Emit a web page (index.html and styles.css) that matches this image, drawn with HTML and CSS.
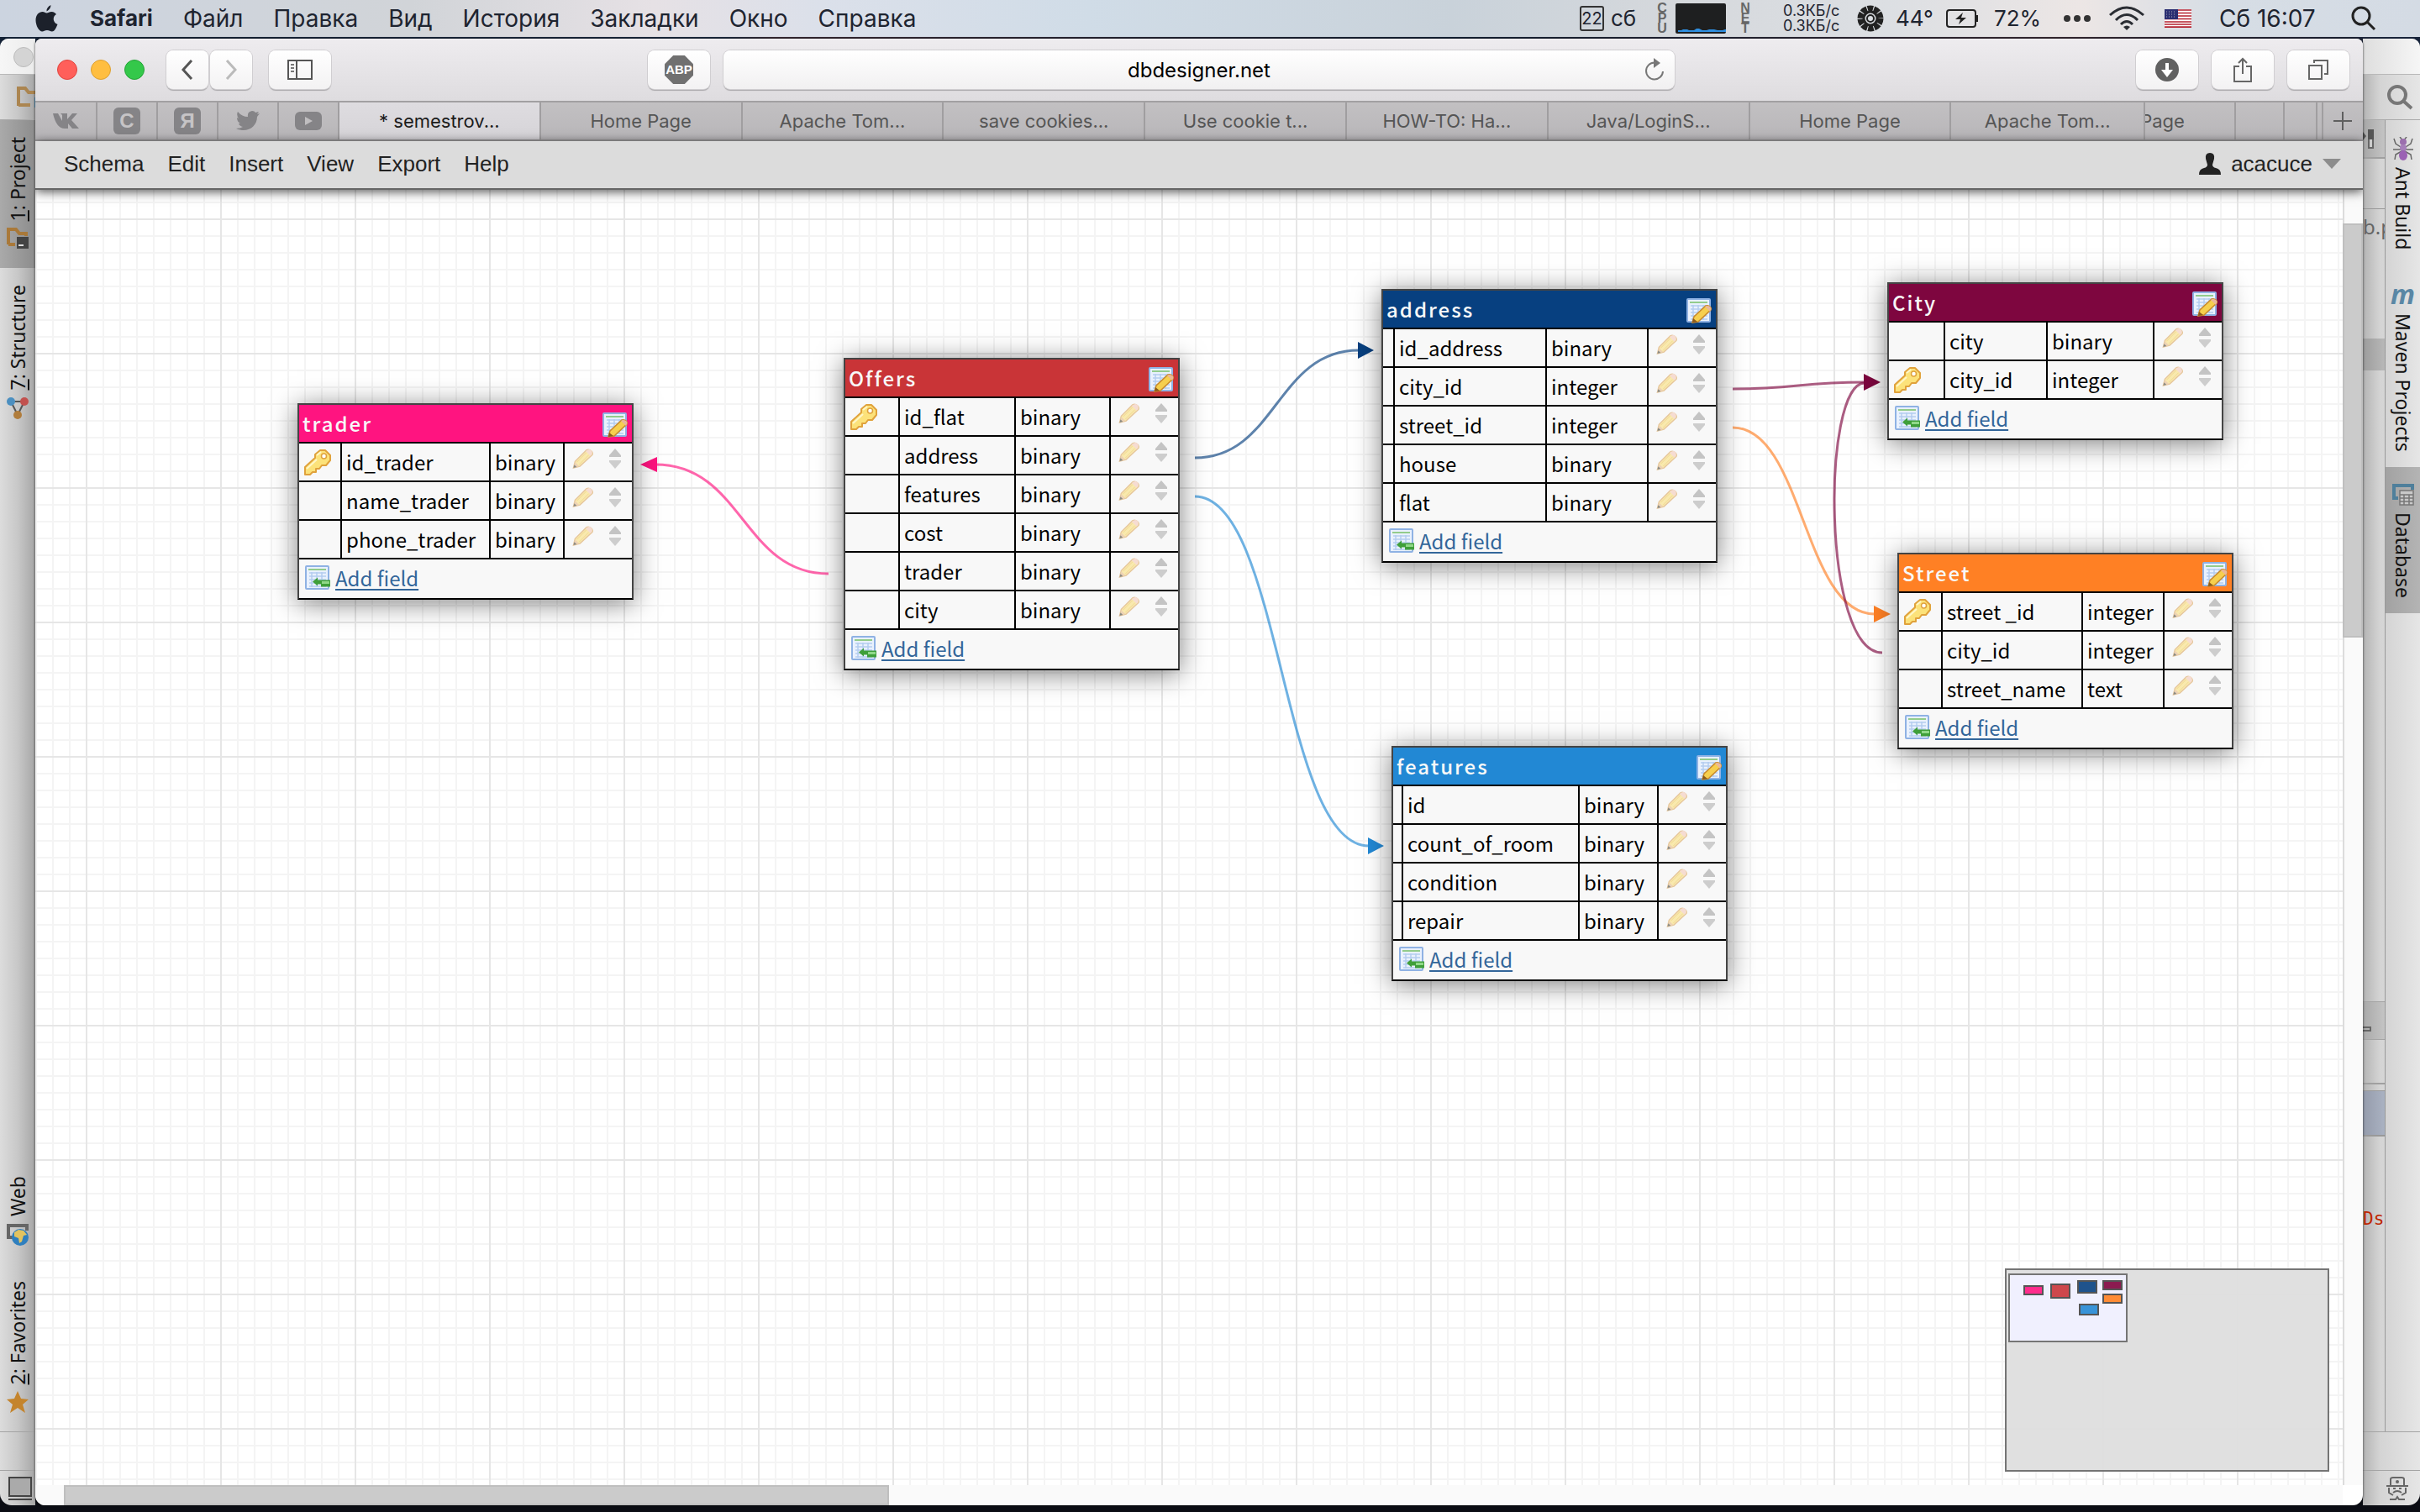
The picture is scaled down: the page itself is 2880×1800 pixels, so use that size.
FILE: index.html
```html
<!DOCTYPE html>
<html lang="ru">
<head>
<meta charset="utf-8">
<title>dbdesigner.net</title>
<link rel="stylesheet" href="styles.css">
</head>
<body>
<svg class="sprite" aria-hidden="true">
  <symbol id="key" viewBox="0 0 33 33">
    <path d="M2 31v-9L14 11v-4l6-5h6l6 6v6l-5 6h-5l-3 4h-4v4h-4l-3 3z" fill="#fce27a" stroke="#e0a23c" stroke-width="2" stroke-linejoin="round"/>
    <path d="M4 24 16 13M16 8l5-4" stroke="#fff6c8" stroke-width="2" fill="none"/>
    <circle cx="24.500" cy="9" r="3" fill="#fff" stroke="#e0a23c" stroke-width="1.500"/>
  </symbol>
  <symbol id="pencil" viewBox="0 0 25 25">
    <path d="M1 24l2-8L17 2q3-2 6 1t1 5L9 22z" fill="#f9e9ae" stroke="#e6c79c" stroke-width="1.500"/>
    <path d="M16 3l6 6 2-2q1-3-1-5t-5 0z" fill="#f6dcd2"/>
    <path d="M5 17 17 5M8 20 20 8" stroke="#efd78e" stroke-width="1"/>
    <path d="M1 24l2-7 5 5z" fill="#ecd2b4"/><path d="M1 24l1-4 3 3z" fill="#8a8a84"/>
  </symbol>
  <symbol id="sort" viewBox="0 0 16 24">
    <path d="M8 0l7 8v2H1V8z" fill="#c4c4c4"/><path d="M8 24l7-8v-2H1v2z" fill="#cdcdcd"/>
  </symbol>
  <symbol id="sheet" viewBox="0 0 30 30">
    <rect x="1" y="1" width="27" height="27" rx="1" fill="#e9f1fd" stroke="#8fb2e4" stroke-width="2"/>
    <path d="M4 5h21" stroke="#93cc8c" stroke-width="2"/>
    <path d="M5 9h20M5 13h20M5 17h20M5 21h20M5 25h20M8 8v18M14 8v18M20 8v18" stroke="#b4cdf0" stroke-width="1.500"/>
  </symbol>
  <symbol id="edit" viewBox="0 0 30 30">
    <use href="#sheet"/>
    <path d="M7 29l2-7L23 9q3-1 5 1t1 4L14 28z" fill="#f6cf4e" stroke="#c98a2c" stroke-width="1.500"/>
    <path d="M22 10l6 6 1-2q1-3-1-4t-4-1z" fill="#eab89a"/><path d="M7 29l1-5 5 4z" fill="#8a5a1c"/>
  </symbol>
  <symbol id="add" viewBox="0 0 31 30">
    <use href="#sheet" width="30" height="30"/>
    <path d="M9 19.500l6-5v3h15v8H19v-3h-4v2z" fill="#3f9f3a"/><path d="M20 19h9v3h-9z" fill="#8fd888"/>
  </symbol>
</svg>

<header class="menubar">
  <nav class="menus" aria-label="Safari">
    <svg class="apple" viewBox="0 0 26 32"><path d="M18 0q0 5-5 7.500Q12.500 3 18 0zM13 9.500c2 0 3-1.500 6-1.500 2.500 0 4.500 1.500 5.500 3-5 3-4 10 1.500 12-2 5-4 8.500-6.500 8.500-2.300 0-3-1.500-6-1.500s-3.700 1.500-5.800 1.500C4 31.500 0 24.500 0 18S4 8 8 8c2.300 0 3.500 1.500 5 1.500z" fill="#1c212b"/></svg>
    <b>Safari</b><span>Файл</span><span>Правка</span><span>Вид</span><span>История</span><span>Закладки</span><span>Окно</span><span>Справка</span>
  </nav>
  <div class="status">
    <span class="daynum">22</span>
    <span>сб</span>
    <span class="stack">C<br>P<br>U</span>
    <svg width="60" height="36" viewBox="0 0 60 36"><rect width="60" height="36" rx="2" fill="#1e1f20"/><path d="M3 34v-2h4l2-1h5l2 1h6l3-2h3l4 2h5l3-1h6l4 1h6l3-1h4v3z" fill="#2f8fe0"/></svg>
    <span class="stack">N<br>E<br>T</span>
    <span class="speed">0.3КБ/с<br>0.3КБ/с</span>
    <svg width="32" height="32" viewBox="0 0 32 32"><circle cx="16" cy="16" r="12" fill="none" stroke="#222" stroke-width="7" stroke-dasharray="6.540 1"/><circle cx="16" cy="16" r="8" fill="none" stroke="#222" stroke-width="3"/><circle cx="16" cy="16" r="4" fill="none" stroke="#222" stroke-width="2"/></svg>
    <span>44°</span>
    <svg width="38" height="22" viewBox="0 0 38 22"><rect x="1" y="1" width="34" height="20" rx="3" fill="none" stroke="#222" stroke-width="2"/><path d="M36 7h2v8h-2z" fill="#222"/><path d="M20 4l-9 8h6l-2 6 9-8h-6z" fill="#222"/></svg>
    <span>72%</span>
    <svg width="32" height="10" viewBox="0 0 32 10"><g fill="#333"><circle cx="4" cy="5" r="4"/><circle cx="16" cy="5" r="4"/><circle cx="28" cy="5" r="4"/></g></svg>
    <svg width="42" height="30" viewBox="0 0 42 30"><g fill="none" stroke="#2a2d33" stroke-width="3"><path d="M1 11Q21-7 41 11"/><path d="M8 17Q21 4 34 17"/><path d="M14 22q7-7 14 0"/></g><path d="M17 25q4-3 8 0l-4 4z" fill="#2a2d33"/></svg>
    <svg width="32" height="22" viewBox="0 0 32 22"><path fill="#fff" d="M0 0h32v22H0z"/><path d="M0 1h32M0 4.500h32M0 8h32M0 11.500h32M0 15h32M0 18h32M0 21.200h32" stroke="#b4202f" stroke-width="1.700"/><path fill="#2b2f72" d="M0 0h16v12H0z"/><path d="M2 3h12M2 6h12M2 9h12" stroke="#aab" stroke-dasharray="1 2"/></svg>
    <span class="clock">Сб 16:07</span>
    <svg width="30" height="30" viewBox="0 0 30 30"><g fill="none" stroke="#222" stroke-width="3"><circle cx="12" cy="12" r="10"/><path d="M19 19l9 9"/></g></svg>
  </div>
</header>

<main class="desktop">
  <aside class="ide ide-left">
    <div class="ide-title"><i class="dot"></i></div>
    <div class="ide-tools"><svg width="24" height="26" viewBox="0 0 24 26"><path d="M2 23V2h8l4 5h10M2 22h14" fill="none" stroke="#ab8550" stroke-width="4"/><path d="M21 13h3v12h-3z" fill="#4e8fb5"/></svg></div>
    <div class="rail">
      <div class="side-tab selected"><span class="up"><u>1</u>: Project</span>
        <svg width="26" height="26" viewBox="0 0 26 26"><path d="M2 20V2h9l4 5h8v3M2 20h8" fill="none" stroke="#a9793a" stroke-width="4"/><path d="M12 11h14v14H12z" fill="#434343"/><path d="M14 20h6v2h-6z" fill="#ddd"/></svg></div>
      <div class="side-tab"><span class="up"><u>7</u>: Structure</span>
        <svg width="26" height="26" viewBox="0 0 26 26"><path d="M5 5h16L13 21z" fill="none" stroke="#555" stroke-width="2"/><circle cx="5" cy="5" r="5" fill="#4b8fc0"/><circle cx="21" cy="5" r="5" fill="#c2514e"/><circle cx="13" cy="21" r="5" fill="#b07c3b"/></svg></div>
      <div class="side-tab push"><span class="up">Web</span>
        <svg width="26" height="26" viewBox="0 0 26 26"><path d="M2 18V2h22v6M2 16h5" fill="none" stroke="#666" stroke-width="4"/><circle cx="16" cy="16" r="10" fill="#2f7fbe"/><path d="M9 10l5-3 6 1 4 5-4 1-2 7-3 2-1-6-5-2z" fill="#e3c35f"/></svg></div>
      <div class="side-tab"><span class="up"><u>2</u>: Favorites</span>
        <svg width="26" height="26" viewBox="0 0 26 26"><path d="M13 0l4 9 9 1-7 6 3 10-9-6-9 6 3-10-7-6 9-1z" fill="#c4842c"/></svg></div>
    </div>
    <div class="ide-status"></div>
    <div class="ide-foot"><svg width="28" height="28" viewBox="0 0 28 28"><path d="M1 1h26v22H1z" fill="#aaa" stroke="#444" stroke-width="2"/><path d="M0 27h28" stroke="#444" stroke-width="2"/></svg></div>
  </aside>

  <section class="browser">
    <div class="toolbar">
      <div class="tools-left">
        <i class="light red"></i><i class="light amber"></i><i class="light green"></i>
        <div class="pair">
          <button class="btn narrow" aria-label="Назад"><svg width="14" height="24" viewBox="0 0 14 24"><path d="M12 1L2 12l10 11" fill="none" stroke="#555" stroke-width="3"/></svg></button>
          <button class="btn narrow" aria-label="Вперёд"><svg width="14" height="24" viewBox="0 0 14 24"><path d="M2 1l10 11L2 23" fill="none" stroke="#bbb" stroke-width="3"/></svg></button>
        </div>
        <button class="btn" aria-label="Боковая панель"><svg width="30" height="24" viewBox="0 0 30 24"><path d="M1 1h28v22H1zM11 1v22" fill="none" stroke="#555" stroke-width="2"/><path d="M4 6h4M4 10h4M4 14h4" stroke="#777" stroke-width="2"/></svg></button>
        <button class="btn abp" aria-label="Adblock Plus"><span>ABP</span></button>
      </div>
      <div class="address-bar">
        <input type="text" value="dbdesigner.net" aria-label="Адрес">
        <button class="reload" aria-label="Обновить"><svg width="24" height="28" viewBox="0 0 24 28"><path d="M12 5.500A10 10 0 1 0 22 16" fill="none" stroke="#777" stroke-width="2"/><path d="M11 0l8 6-8 6z" fill="#777"/></svg></button>
      </div>
      <div class="tools-right">
        <button class="btn" aria-label="Загрузки"><svg width="28" height="28" viewBox="0 0 28 28"><circle cx="14" cy="14" r="14" fill="#616161"/><path d="M12 6h4v8h5l-7 9-7-9h5z" fill="#fff"/></svg></button>
        <button class="btn" aria-label="Поделиться"><svg width="24" height="30" viewBox="0 0 24 30"><path d="M8 11H2v18h20V11h-6M12 20V2M7 7l5-5 5 5" fill="none" stroke="#666" stroke-width="2"/></svg></button>
        <button class="btn" aria-label="Все вкладки"><svg width="26" height="26" viewBox="0 0 26 26"><path d="M2 8h15v16H2zM8 5V2h16v16h-4" fill="none" stroke="#666" stroke-width="2"/></svg></button>
      </div>
    </div>

    <nav class="tabs" aria-label="Вкладки">
      <div class="tab"><svg width="34" height="20" viewBox="0 0 34 20"><path d="M2 1h6l5 9V3l-2-2h8v7l6-7h6l-7 8 9 10h-8l-5-6v6h-4Q6 19 2 1z" fill="#858487"/></svg></div>
      <div class="tab"><span class="fav">C</span></div>
      <div class="tab"><span class="fav">Я</span></div>
      <div class="tab"><svg width="28" height="24" viewBox="0 0 28 24"><path d="M28 3l-3 4C25 19 13 27 0 21q5 0 8-2-4-1-5-4h2Q1 13 1 8l2 1Q0 5 2 1q5 6 12 6-1-6 5-7 3 0 4 2l4-1-2 3z" fill="#858487"/></svg></div>
      <div class="tab"><svg width="32" height="22" viewBox="0 0 32 22"><rect width="32" height="22" rx="6" fill="#858487"/><path d="M12 6l9 5-9 5z" fill="#c0bec0"/></svg></div>
      <div class="tab active">* semestrov...</div>
      <div class="tab">Home Page</div>
      <div class="tab">Apache Tom...</div>
      <div class="tab">save cookies...</div>
      <div class="tab">Use cookie t...</div>
      <div class="tab">HOW-TO: Ha...</div>
      <div class="tab">Java/LoginS...</div>
      <div class="tab">Home Page</div>
      <div class="tab">Apache Tom...</div>
      <div class="tab clipped">Page</div>
      <div class="tab"></div><div class="tab"></div><div class="tab"></div>
      <button class="tab plus" aria-label="Новая вкладка"><svg width="22" height="22" viewBox="0 0 22 22"><path d="M11 0v22M0 11h22" stroke="#5f5f5f" stroke-width="2"/></svg></button>
    </nav>

    <div class="app-menu">
      <nav><a href="#">Schema</a><a href="#">Edit</a><a href="#">Insert</a><a href="#">View</a><a href="#">Export</a><a href="#">Help</a></nav>
      <a class="user" href="#"><svg width="26" height="26" viewBox="0 0 26 26"><path d="M13 0q6 0 5 7l-2 7q0 3 4 4 6 1 6 8H0q0-7 6-8 4-1 4-4L8 7Q7 0 13 0z" fill="#222"/></svg><span>acacuce</span><svg width="22" height="12" viewBox="0 0 22 12"><path d="M0 0h22L11 12z" fill="#8d8d8d"/></svg></a>
    </div>

    <div class="viewport">
      <div class="canvas">
        <svg class="links" width="2746" height="1542" viewBox="42 226 2746 1542">
          <g fill="none" stroke-width="3" stroke-opacity=".65">
            <path d="M986 683C884 683 884 553 780 553" stroke="#ff1480"/>
            <path d="M1422 545C1519 545 1519 417 1617 417" stroke="#074080"/>
            <path d="M1422 591C1525 591 1525 1007 1629 1007" stroke="#2288d4"/>
            <path d="M2062 463C2140 463 2140 455 2219 455" stroke="#7e063f"/>
            <path d="M2062 509C2146 509 2146 731 2231 731" stroke="#ff8024"/>
            <path d="M2240 777C2168 777 2168 456 2219 456" stroke="#7e063f"/>
          </g>
          <path d="M762 553l20-9v18z" fill="#ff1480"/>
          <path d="M1635 417l-19-10v20z" fill="#074080"/>
          <path d="M1647 1007l-19-10v20z" fill="#2288d4"/>
          <path d="M2238 455l-20-10v20z" fill="#7e063f"/>
          <path d="M2250 731l-20-10v20z" fill="#ff8024"/>
        </svg>

        <article class="entity trader">
          <header><h2>trader</h2><button aria-label="Edit table"><svg><use href="#edit"/></svg></button></header>
          <table>
            <tr><td><svg class="key"><use href="#key"/></svg></td><td>id_trader</td><td>binary</td><td class="acts"><svg class="pencil"><use href="#pencil"/></svg><svg class="sort"><use href="#sort"/></svg></td></tr>
            <tr><td></td><td>name_trader</td><td>binary</td><td class="acts"><svg class="pencil"><use href="#pencil"/></svg><svg class="sort"><use href="#sort"/></svg></td></tr>
            <tr><td></td><td>phone_trader</td><td>binary</td><td class="acts"><svg class="pencil"><use href="#pencil"/></svg><svg class="sort"><use href="#sort"/></svg></td></tr>
          </table>
          <footer><svg><use href="#add"/></svg><a href="#">Add field</a></footer>
        </article>

        <article class="entity offers">
          <header><h2>Offers</h2><button aria-label="Edit table"><svg><use href="#edit"/></svg></button></header>
          <table>
            <tr><td><svg class="key"><use href="#key"/></svg></td><td>id_flat</td><td>binary</td><td class="acts"><svg class="pencil"><use href="#pencil"/></svg><svg class="sort"><use href="#sort"/></svg></td></tr>
            <tr><td></td><td>address</td><td>binary</td><td class="acts"><svg class="pencil"><use href="#pencil"/></svg><svg class="sort"><use href="#sort"/></svg></td></tr>
            <tr><td></td><td>features</td><td>binary</td><td class="acts"><svg class="pencil"><use href="#pencil"/></svg><svg class="sort"><use href="#sort"/></svg></td></tr>
            <tr><td></td><td>cost</td><td>binary</td><td class="acts"><svg class="pencil"><use href="#pencil"/></svg><svg class="sort"><use href="#sort"/></svg></td></tr>
            <tr><td></td><td>trader</td><td>binary</td><td class="acts"><svg class="pencil"><use href="#pencil"/></svg><svg class="sort"><use href="#sort"/></svg></td></tr>
            <tr><td></td><td>city</td><td>binary</td><td class="acts"><svg class="pencil"><use href="#pencil"/></svg><svg class="sort"><use href="#sort"/></svg></td></tr>
          </table>
          <footer><svg><use href="#add"/></svg><a href="#">Add field</a></footer>
        </article>

        <article class="entity address">
          <header><h2>address</h2><button aria-label="Edit table"><svg><use href="#edit"/></svg></button></header>
          <table>
            <tr><td></td><td>id_address</td><td>binary</td><td class="acts"><svg class="pencil"><use href="#pencil"/></svg><svg class="sort"><use href="#sort"/></svg></td></tr>
            <tr><td></td><td>city_id</td><td>integer</td><td class="acts"><svg class="pencil"><use href="#pencil"/></svg><svg class="sort"><use href="#sort"/></svg></td></tr>
            <tr><td></td><td>street_id</td><td>integer</td><td class="acts"><svg class="pencil"><use href="#pencil"/></svg><svg class="sort"><use href="#sort"/></svg></td></tr>
            <tr><td></td><td>house</td><td>binary</td><td class="acts"><svg class="pencil"><use href="#pencil"/></svg><svg class="sort"><use href="#sort"/></svg></td></tr>
            <tr><td></td><td>flat</td><td>binary</td><td class="acts"><svg class="pencil"><use href="#pencil"/></svg><svg class="sort"><use href="#sort"/></svg></td></tr>
          </table>
          <footer><svg><use href="#add"/></svg><a href="#">Add field</a></footer>
        </article>

        <article class="entity city">
          <header><h2>City</h2><button aria-label="Edit table"><svg><use href="#edit"/></svg></button></header>
          <table>
            <tr><td></td><td>city</td><td>binary</td><td class="acts"><svg class="pencil"><use href="#pencil"/></svg><svg class="sort"><use href="#sort"/></svg></td></tr>
            <tr><td><svg class="key"><use href="#key"/></svg></td><td>city_id</td><td>integer</td><td class="acts"><svg class="pencil"><use href="#pencil"/></svg><svg class="sort"><use href="#sort"/></svg></td></tr>
          </table>
          <footer><svg><use href="#add"/></svg><a href="#">Add field</a></footer>
        </article>

        <article class="entity street">
          <header><h2>Street</h2><button aria-label="Edit table"><svg><use href="#edit"/></svg></button></header>
          <table>
            <tr><td><svg class="key"><use href="#key"/></svg></td><td>street _id</td><td>integer</td><td class="acts"><svg class="pencil"><use href="#pencil"/></svg><svg class="sort"><use href="#sort"/></svg></td></tr>
            <tr><td></td><td>city_id</td><td>integer</td><td class="acts"><svg class="pencil"><use href="#pencil"/></svg><svg class="sort"><use href="#sort"/></svg></td></tr>
            <tr><td></td><td>street_name</td><td>text</td><td class="acts"><svg class="pencil"><use href="#pencil"/></svg><svg class="sort"><use href="#sort"/></svg></td></tr>
          </table>
          <footer><svg><use href="#add"/></svg><a href="#">Add field</a></footer>
        </article>

        <article class="entity features">
          <header><h2>features</h2><button aria-label="Edit table"><svg><use href="#edit"/></svg></button></header>
          <table>
            <tr><td></td><td>id</td><td>binary</td><td class="acts"><svg class="pencil"><use href="#pencil"/></svg><svg class="sort"><use href="#sort"/></svg></td></tr>
            <tr><td></td><td>count_of_room</td><td>binary</td><td class="acts"><svg class="pencil"><use href="#pencil"/></svg><svg class="sort"><use href="#sort"/></svg></td></tr>
            <tr><td></td><td>condition</td><td>binary</td><td class="acts"><svg class="pencil"><use href="#pencil"/></svg><svg class="sort"><use href="#sort"/></svg></td></tr>
            <tr><td></td><td>repair</td><td>binary</td><td class="acts"><svg class="pencil"><use href="#pencil"/></svg><svg class="sort"><use href="#sort"/></svg></td></tr>
          </table>
          <footer><svg><use href="#add"/></svg><a href="#">Add field</a></footer>
        </article>

        <svg class="minimap" width="386" height="242" viewBox="0 0 386 242">
          <rect x="1" y="1" width="384" height="240" fill="#dedede" fill-opacity=".95" stroke="#757575" stroke-width="2"/>
          <rect x="5" y="7" width="140" height="80" fill="#f0f0fe" stroke="#757575" stroke-width="2"/>
          <g stroke="#555" stroke-width="2">
            <rect x="23" y="21" width="22" height="10" fill="#ff2c8c"/>
            <rect x="55" y="19" width="22" height="16" fill="#ce484c"/>
            <rect x="87" y="15" width="22" height="14" fill="#1f538c"/>
            <rect x="89" y="43" width="22" height="12" fill="#3893d8"/>
            <rect x="117" y="15" width="22" height="10" fill="#8b1b50"/>
            <rect x="117" y="31" width="22" height="10" fill="#ff8c36"/>
          </g>
        </svg>
      </div>
      <div class="vscroll"><div class="vthumb"></div></div>
      <div class="hscroll"><div class="hthumb"></div></div>
    </div>
  </section>

  <aside class="ide ide-right">
    <div class="ide-title"></div>
    <div class="ide-tools"><svg width="32" height="32" viewBox="0 0 32 32"><g fill="none" stroke="#777" stroke-width="4"><circle cx="13" cy="13" r="10"/><path d="M20 20l10 9"/></g></svg></div>
    <div class="ide-body">
      <div class="editor">
        <div class="ed-head"><svg width="14" height="24" viewBox="0 0 14 24"><path d="M0 3l4 5-4 5z" fill="#555"/><path d="M7 1h5v21H7z" fill="#ccc" stroke="#666" stroke-width="2"/><path d="M6 0h7v12H6z" fill="#555"/></svg></div>
        <div class="ed-crumbs"></div>
        <div class="ed-file">b.p</div>
        <div class="ed-row"></div>
        <div class="ed-space"></div>
        <div class="ed-panel"><i></i></div>
        <div class="ed-panel2"></div>
        <div class="ed-select"></div>
        <div class="ed-log">Ds</div>
      </div>
      <div class="rail">
        <div class="side-tab"><svg width="24" height="28" viewBox="0 0 24 28"><g fill="none" stroke="#666" stroke-width="1.500"><path d="M12 14L3 8 1 2M12 14l9-6 2-6M12 15H0M12 15h12M12 16l-9 5-1 6M12 16l9 5 1 6M12 5L8 0M12 5l4-5"/></g><circle cx="12" cy="6" r="4" fill="#9b6fae"/><circle cx="12" cy="13" r="4" fill="#a67fba"/><ellipse cx="12" cy="22" rx="5" ry="6" fill="#9b62b4"/></svg><span class="down">Ant Build</span></div>
        <div class="side-tab"><b class="maven">m</b><span class="down">Maven Projects</span></div>
        <div class="side-tab selected"><svg width="26" height="26" viewBox="0 0 26 26"><path d="M2 19V2h22v5M2 17h5" fill="none" stroke="#4f7f9b" stroke-width="4"/><path d="M9 8h16v17H9zM9 13h16M9 17h16M9 21h16M14 13v12M20 13v12" fill="#c9c9c9" stroke="#777" stroke-width="1.500"/></svg><span class="down">Database</span></div>
      </div>
    </div>
    <div class="ide-status"></div>
    <div class="ide-foot"><svg width="26" height="28" viewBox="0 0 26 28"><g fill="none" stroke="#666" stroke-width="2"><path d="M5 10V3q0-2 3-2h10q3 0 3 2v7M0 11h26M3 13v6l5 3M23 13v6l-5 3M8 19q5-4 10 0M4 27h7l2-3 2 3h7M8 14h3M15 14h3"/></g><circle cx="13" cy="6" r="2" fill="#666"/></svg></div>
  </aside>
</main>
</body>
</html>
```
FILE: styles.css
```css
* { box-sizing: border-box; }
body {
  margin: 0;
  height: 100vh;
  display: flex;
  flex-direction: column;
  overflow: hidden;
  background: #0b0d14;
  font-family: Inter, "Noto Sans", sans-serif;
}
svg { display: block; flex: none; }
button { border: 0; padding: 0; background: none; font: inherit; }
a { color: inherit; text-decoration: none; }
.sprite { position: absolute; width: 0; height: 0; }

/* system menu bar */
.menubar {
  height: 44px;
  flex: none;
  display: flex;
  justify-content: space-between;
  align-items: center;
  padding-left: 42px;
  font-size: 26px;
  line-height: 44px;
  color: #1e2430;
  background: linear-gradient(90deg, #ccd4e0, #d1d4d8 17%, #e6e1e5 27%, #dbe0ea 34%, #d0dce7 45%, #c9d2da 60%, #d5d8dc 69%, #dcdfe3 78%, #ece6e5 86%, #d6dde5 92%, #d4dbe4);
}
.menus { display: flex; align-items: center; gap: 36px; }
.menus span, .clock { font-size: 28px; }
.apple { width: 27px; height: 32px; margin-right: 2px; }
.status {
  display: grid;
  grid-template-columns: 37px 53px 24px 75px 53px 88px 46px 60px 57px 83px 54px 66px 65px 157px 82px;
  align-items: center;
  white-space: nowrap;
}
.daynum { width: 29px; height: 30px; border: 2px solid #333; border-radius: 3px; font-size: 20px; line-height: 26px; text-align: center; }
.stack { font: bold 16px/12px "Liberation Sans", sans-serif; width: 16px; text-align: center; color: #666; }
.speed { font-size: 18px; line-height: 18px; }

/* desktop with the windows side by side */
.desktop {
  flex: 1;
  min-height: 0;
  display: grid;
  grid-template-columns: 42px minmax(0, 1fr) 68px;
  padding: 2px 0 8px;
  background: linear-gradient(90deg, #142236, #1c2a40 30%, #3a2a34 32%, #142236 60%, #3a2a34 85%, #16233a) top / 100% 20px no-repeat;
}

/* IDE window behind the browser */
.ide { display: flex; flex-direction: column; overflow: hidden; font-family: "Noto Sans", sans-serif; color: #111; }
.ide-left { border-radius: 10px 0 0 14px; background: linear-gradient(90deg, #dcdcdc, #c8c8c8 50%, #a6a6a6); }
.ide-right { border-radius: 0 10px 14px 0; background: linear-gradient(90deg, #b4b4b4, #d4d4d4 30%, #e6e6e6); }
.ide-title { height: 43px; flex: none; background: linear-gradient(90deg, #f6f6f6, #ececec); border-bottom: 1px solid #b8b8b8; }
.ide-right .ide-title { background: linear-gradient(90deg, #dedede, #f6f6f6); }
.dot { display: block; width: 24px; height: 24px; margin: 10px 0 0 16px; border-radius: 50%; background: #d4d4d4; border: 1px solid #bbb; }
.ide-tools { height: 54px; flex: none; display: flex; align-items: center; padding-left: 20px; border-bottom: 1px solid #aaa; }
.ide-right .ide-tools { padding-left: 28px; }
.rail { flex: 1; display: flex; flex-direction: column; }
.side-tab { display: flex; flex-direction: column; align-items: center; gap: 8px; padding: 20px 0 22px; font-size: 23px; line-height: 28px; white-space: nowrap; }
.side-tab.selected { background: linear-gradient(90deg, #aaa, #8c8c8c); }
.side-tab.push { margin-top: auto; }
.up { writing-mode: vertical-rl; transform: rotate(180deg); }
.down { writing-mode: vertical-rl; }
.ide-status { height: 46px; flex: none; border-top: 1px solid #a4a4a4; }
.ide-foot { height: 42px; flex: none; border-top: 1px solid #a4a4a4; padding: 7px 0 0 10px; }
.ide-right .ide-foot { padding-left: 28px; }
.ide-body { flex: 1; min-height: 0; display: grid; grid-template-columns: 26px 1fr; }
.ide-body .rail { border-left: 1px solid #999; background: linear-gradient(90deg, #d4d4d4, #e6e6e6); }
.ide-body .side-tab { padding: 20px 0 18px; }
.ide-body .side-tab.selected { background: linear-gradient(90deg, #a2a2a2, #b4b4b4); }
.maven { font: italic bold 32px/30px "Noto Sans", sans-serif; color: #5a87a5; }
.editor { display: flex; flex-direction: column; overflow: hidden; }
.ed-head { height: 46px; padding: 11px 0 0; border-bottom: 2px solid #a0a0a0; background: linear-gradient(90deg, #a6a6a6, #c4c4c4); }
.ed-crumbs { height: 60px; border-bottom: 1px solid #999; }
.ed-file { height: 154px; padding-top: 4px; font-size: 24px; line-height: 34px; color: #666; }
.ed-row { height: 38px; background: linear-gradient(90deg, #9c9c9c, #b8b8b8); }
.ed-space { flex: 1; }
.ed-panel { height: 46px; border: solid #a4a4a4; border-width: 1px 0; background: linear-gradient(90deg, #a8a8a8, #c4c4c4); }
.ed-panel i { display: block; width: 10px; height: 6px; margin-top: 29px; border: 2px solid #666; border-left: 0; }
.ed-panel2 { height: 53px; margin-bottom: 7px; border-bottom: 2px solid #a0a0a0; }
.ed-select { height: 55px; border: solid #999; border-width: 1px 0 2px; background: linear-gradient(90deg, #949bab, #aab2c2); }
.ed-log { height: 351px; padding-top: 83px; font: 21px/30px "DejaVu Sans Mono", monospace; color: #bf2600; }

/* browser window */
.browser {
  position: relative;
  display: flex;
  flex-direction: column;
  min-width: 0;
  border-radius: 8px 8px 12px 12px;
  background: #fff;
  box-shadow: 0 0 3px rgba(0, 0, 0, .8);
  overflow: hidden;
}
.toolbar {
  height: 74px;
  flex: none;
  display: grid;
  grid-template-columns: 1fr minmax(0, 1132px) 1fr;
  align-items: center;
  background: linear-gradient(#eeecef, #dedcdf);
}
.tools-left { display: flex; align-items: center; gap: 16px; padding: 0 16px 0 26px; }
.tools-right { display: flex; justify-content: flex-end; gap: 16px; padding-right: 16px; }
.light { width: 24px; height: 24px; border-radius: 50%; border: 1px solid; }
.red { background: #ff5f5a; border-color: #e0443e; }
.amber { background: #ffbe40; border-color: #dea02f; }
.green { background: #34c84a; border-color: #24a337; }
.pair { display: flex; gap: 2px; margin: 0 4px 0 10px; }
.btn {
  width: 74px;
  height: 46px;
  display: flex;
  align-items: center;
  justify-content: center;
  border-radius: 8px;
  background: linear-gradient(#fff, #f3f2f3);
  box-shadow: 0 0 0 1px #d0ced1, 0 2px 1px #a9a7aa;
}
.btn.narrow { width: 50px; }
.abp { margin-left: auto; }
.abp span {
  width: 34px;
  height: 34px;
  font: bold 15px/34px "Liberation Sans", sans-serif;
  color: #fff;
  background: #707070;
  clip-path: polygon(30% 0, 70% 0, 100% 30%, 100% 70%, 70% 100%, 30% 100%, 0 70%, 0 30%);
}
.address-bar {
  display: flex;
  align-items: center;
  height: 46px;
  padding: 0 12px 0 36px;
  border-radius: 8px;
  background: linear-gradient(#fff, #f1f0f1);
  box-shadow: 0 0 0 1px #d0ced1, 0 2px 1px #a9a7aa;
}
.address-bar input { flex: 1; min-width: 0; border: 0; padding: 2px 0 0; background: none; text-align: center; font: 24px/32px Inter, sans-serif; color: #000; }

.tabs {
  height: 48px;
  flex: none;
  display: grid;
  grid-template-columns: 74px repeat(4, 72px) repeat(8, minmax(0, 240fr)) minmax(0, 231fr) minmax(0, 108fr) minmax(0, 58fr) 39px 7px 47px;
  border: solid #a2a0a2;
  border-width: 2px 0;
  background: linear-gradient(#c2c0c2, #b8b6b9);
}
.tab {
  display: flex;
  align-items: center;
  justify-content: center;
  overflow: hidden;
  white-space: nowrap;
  border-right: 2px solid #a09ea0;
  font-size: 22px;
  color: #555;
}
.tab.active { background: linear-gradient(#dedce0, #d6d4d8); color: #1c1c1c; }
.tab.clipped { justify-content: flex-start; text-indent: -6px; }
.tab.plus { border-right: 0; }
.fav { width: 32px; height: 32px; border-radius: 6px; background: #858487; color: #c6c4c6; font: bold 24px/32px "Liberation Sans", sans-serif; text-align: center; }

.app-menu {
  position: relative;
  z-index: 2;
  height: 58px;
  flex: none;
  display: flex;
  justify-content: space-between;
  align-items: center;
  padding: 0 26px 2px 34px;
  border-bottom: 2px solid #666;
  background: #dcdcdc;
  box-shadow: 0 2px 12px rgba(0, 0, 0, .7);
  font: 26px/32px "Liberation Sans", sans-serif;
  color: #222;
}
.app-menu nav { display: flex; gap: 28px; }
.user { display: flex; align-items: center; gap: 12px; }

.viewport { flex: 1; min-height: 0; display: grid; grid-template: minmax(0, 1fr) 24px / minmax(0, 1fr) 24px; }
.canvas {
  position: relative;
  overflow: hidden;
  background-color: #fff;
  background-image:
    linear-gradient(90deg, #e6e6e6 2px, transparent 2px),
    linear-gradient(#e6e6e6 2px, transparent 2px),
    linear-gradient(90deg, #f4f4f4 2px, transparent 2px),
    linear-gradient(#f4f4f4 2px, transparent 2px);
  background-size: 160px 160px, 160px 160px, 20px 20px, 20px 20px;
  background-position: 60px 34px, 60px 34px, 0 14px, 0 14px;
}
.links { position: absolute; left: 0; top: 0; }
.vscroll { border-left: 2px solid #dcdcdc; background: #fafafa; padding-top: 40px; }
.vthumb { height: 493px; margin-left: -2px; background: #cbcbcb; border: 2px solid #bfbfbf; }
.hscroll { background: #fafafa; padding-left: 34px; }
.hthumb { width: 982px; height: 24px; background: #cbcbcb; border: solid #bfbfbf; border-width: 2px; }

/* entity cards; each one sets its place, colour and column widths */
.entity {
  position: absolute;
  width: 400px;
  border: 2px solid #444;
  border-bottom-color: #000;
  background: #f8f8f8;
  box-shadow: 0 4px 30px rgba(0, 0, 0, .5);
  font: 24px/44px "Noto Sans CJK SC", "Noto Sans", sans-serif;
  color: #000;
}
.trader { left: 312px; top: 254px; --tint: #ff1480; --c1: 49px; --c2: 177px; --c3: 88px; }
.offers { left: 962px; top: 200px; --tint: #c93437; --c1: 63px; --c2: 138px; --c3: 113px; }
.address { left: 1602px; top: 118px; --tint: #074080; --c1: 12px; --c2: 181px; --c3: 121px; }
.city { left: 2204px; top: 110px; --tint: #7e063f; --c1: 65px; --c2: 122px; --c3: 127px; }
.street { left: 2216px; top: 432px; --tint: #ff8024; --c1: 50px; --c2: 167px; --c3: 97px; }
.features { left: 1614px; top: 662px; --tint: #2288d4; --c1: 10px; --c2: 210px; --c3: 94px; }
.entity header { display: flex; justify-content: space-between; height: 44px; padding: 0 5px 0 4px; background: var(--tint); }
.entity h2 { margin: 0; font-size: 24px; font-weight: 500; line-height: 44px; letter-spacing: 2px; color: #f8f8f8; }
.entity header svg { width: 30px; height: 30px; margin-top: 9px; }
.entity header button { align-self: flex-start; }
.entity table { width: 396px; table-layout: fixed; border-collapse: separate; border-spacing: 0; }
.entity td { height: 46px; padding: 0; border-top: 2px solid #000; vertical-align: top; white-space: nowrap; line-height: 44px; }
.entity td + td { border-left: 2px solid #000; padding-left: 5px; }
.entity td:nth-child(1) { width: var(--c1); }
.entity td:nth-child(2) { width: var(--c2); }
.entity td:nth-child(3) { width: var(--c3); }
.entity td.acts { padding: 6px 0 0 9px; line-height: 0; }
.key { width: 33px; height: 33px; margin: 6px 0 0 5px; }
.pencil { display: inline-block; width: 25px; height: 24px; margin-right: 18px; }
.sort { display: inline-block; width: 16px; height: 24px; }
.entity footer { display: flex; align-items: center; gap: 5px; height: 48px; padding: 0 0 2px 7px; border-top: 2px solid #000; }
.entity footer svg { width: 31px; height: 30px; }
.entity footer a { color: #33669a; text-decoration: underline; text-decoration-thickness: 2px; text-underline-offset: 3px; }
.minimap { position: absolute; right: 16px; bottom: 16px; }
```
